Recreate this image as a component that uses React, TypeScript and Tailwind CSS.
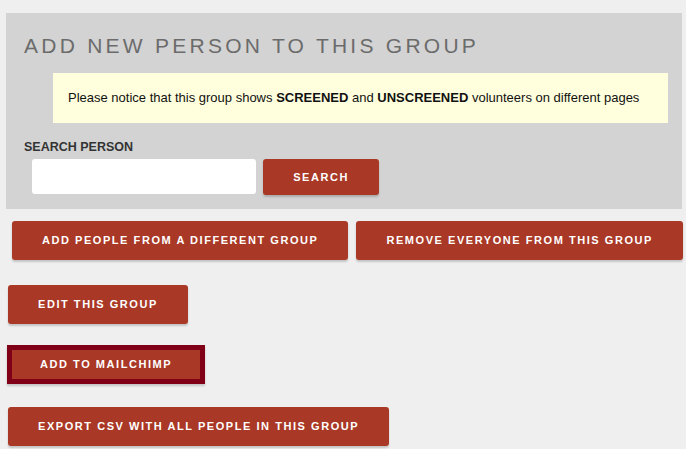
import React from "react";

const btn =
  "h-[39px] px-[30px] whitespace-nowrap bg-[#a93826] text-white text-[11px] font-bold tracking-[1.55px] rounded-[3px] shadow-[0_2px_2px_rgba(0,0,0,0.18)]";

export default function App() {
  return (
    <div className="min-h-[449px] bg-[#efefef] pt-[13px] font-['Liberation_Sans',Arial,sans-serif]">
      <div className="mx-[6px] mr-[4px] h-[196px] bg-[#d3d3d3] pl-[18px] pt-[20px]">
        <h1 className="text-[21px] leading-[26px] tracking-[3.25px] text-[#6b6b6b]">
          ADD NEW PERSON TO THIS GROUP
        </h1>
        <div className="ml-[29px] mt-[14px] mr-[14px] flex h-[50px] items-center bg-[#ffffdd] pl-[15px] text-[13px] text-[#111]">
          <span>
            Please notice that this group shows <b>SCREENED</b> and <b>UNSCREENED</b> volunteers on different pages
          </span>
        </div>
        <div className="mt-[15px] text-[12.5px] font-bold text-[#333]">SEARCH PERSON</div>
        <div className="mt-[2px] flex gap-[7px] pl-[8px]">
          <input className="h-[35px] w-[224px] rounded-[3px] bg-white outline-none" />
          <button className="h-[36px] w-[116px] rounded-[3px] bg-[#a93826] text-[11px] font-bold tracking-[1.55px] text-white shadow-[0_2px_2px_rgba(0,0,0,0.18)]">
            SEARCH
          </button>
        </div>
      </div>
      <div className="mt-[12px] flex gap-[8px] pl-[12px]">
        <button className={btn}>ADD PEOPLE FROM A DIFFERENT GROUP</button>
        <button className={btn}>REMOVE EVERYONE FROM THIS GROUP</button>
      </div>
      <div className="mt-[25px] pl-[8px]">
        <button className={btn}>EDIT THIS GROUP</button>
      </div>
      <div className="mt-[21px] pl-[7px]">
        <button className="h-[39px] whitespace-nowrap border-[5px] border-[#800018] bg-[#a93826] px-[28px] text-[11px] font-bold tracking-[1.55px] text-white shadow-[0_2px_2px_rgba(0,0,0,0.18)]">
          ADD TO MAILCHIMP
        </button>
      </div>
      <div className="mt-[23px] pl-[8px]">
        <button className={btn}>EXPORT CSV WITH ALL PEOPLE IN THIS GROUP</button>
      </div>
    </div>
  );
}
